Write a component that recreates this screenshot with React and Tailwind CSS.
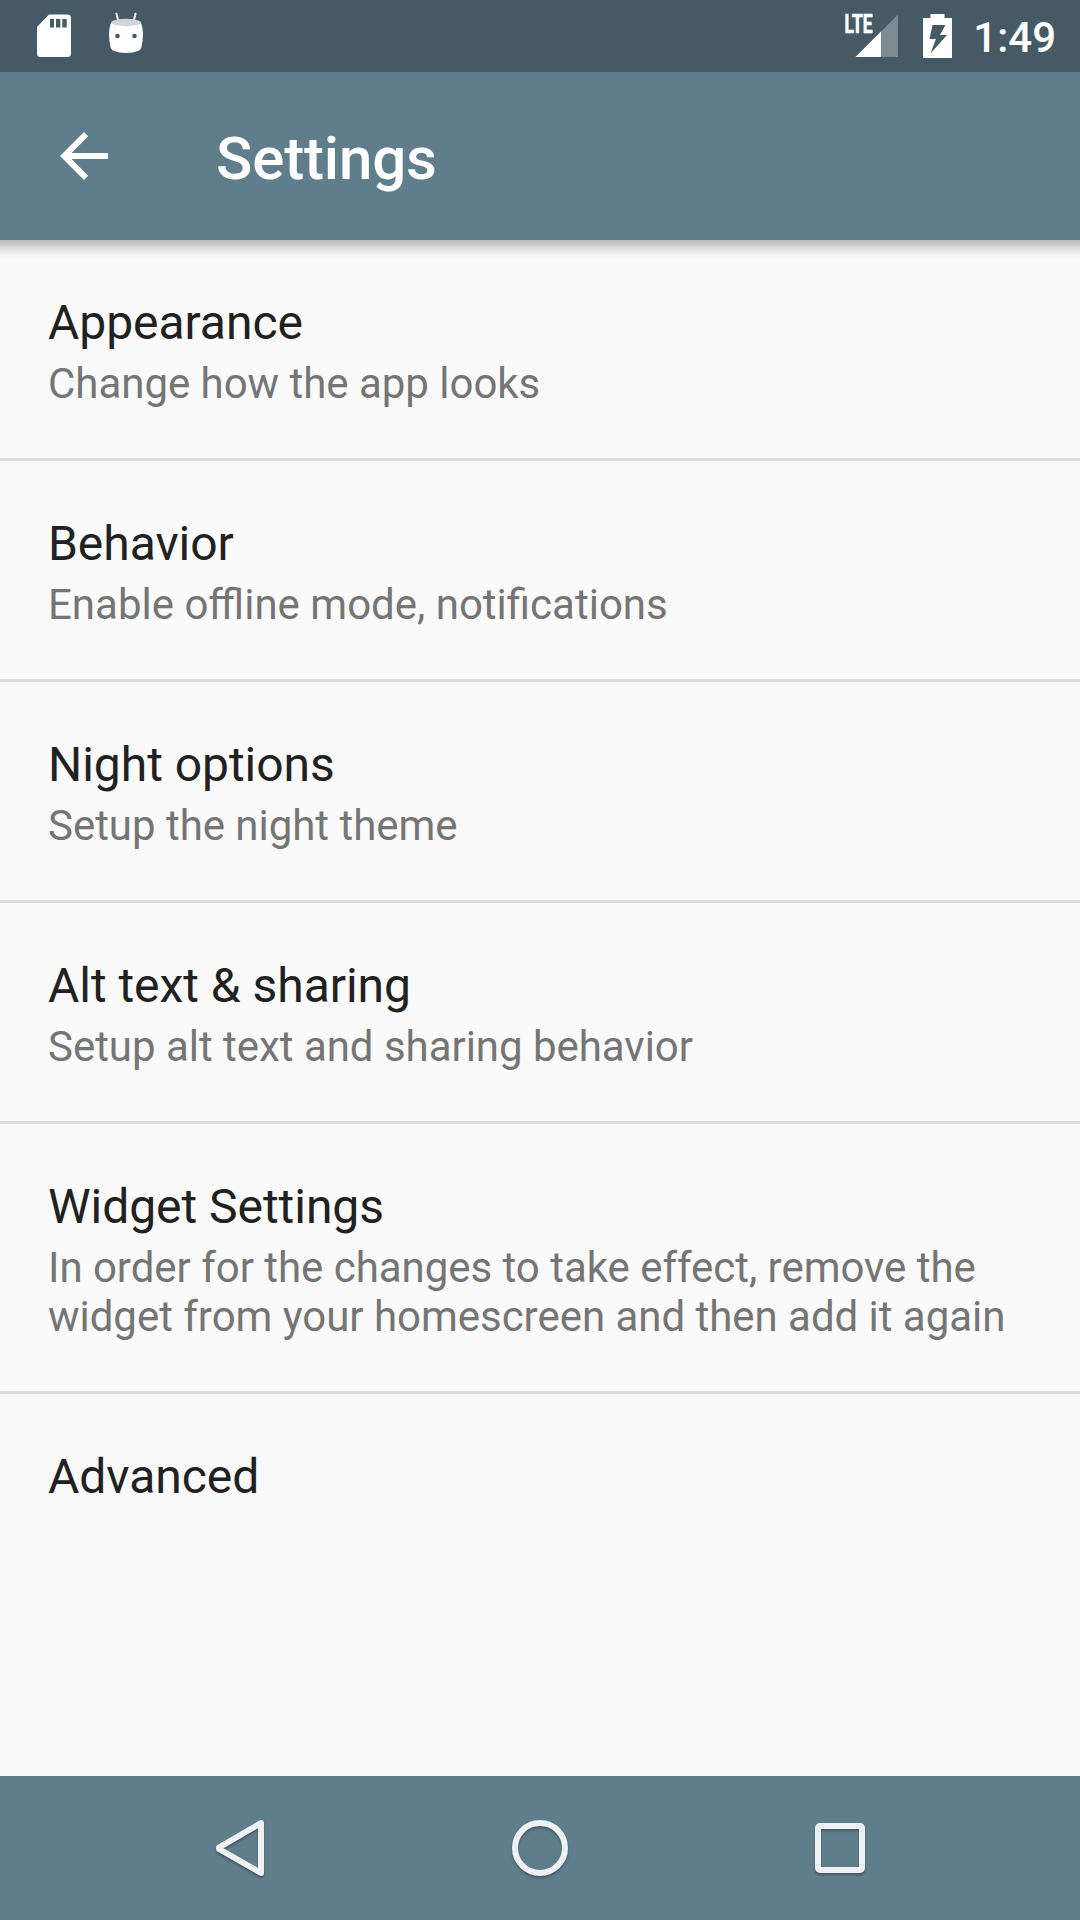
const ITEMS = [
  { title: "Appearance", summary: "Change how the app looks" },
  { title: "Behavior", summary: "Enable offline mode, notifications", ligatures: true },
  { title: "Night options", summary: "Setup the night theme" },
  { title: "Alt text & sharing", summary: "Setup alt text and sharing behavior" },
  {
    title: "Widget Settings",
    summary: "In order for the changes to take effect, remove the widget from your homescreen and then add it again",
  },
  { title: "Advanced" },
];

function SdCardIcon() {
  return (
    <svg className="ml-9 h-[72px] w-9 shrink-0" viewBox="36 0 36 72">
      <path fill="#fff" d="M49 14.5H67.5a3.5 3.5 0 0 1 3.5 3.5V53.500a3.500 3.500 0 0 1-3.500 3.500H40.500a3.500 3.500 0 0 1-3.500-3.500V27Z" />
      <path fill="#455a64" d="M50 19h4v8.500h-4zM56 19h4.300v8.500H56zM62.300 19h4.400v8.500h-4.400z" />
    </svg>
  );
}

function DroidIcon() {
  return (
    <svg className="ml-9 h-[72px] w-9 shrink-0" viewBox="108 0 36 72">
      <path d="M116.500 13.700l2 8M135.500 13.700l-2 8" stroke="#fff" strokeWidth="2" strokeLinecap="round" />
      <path fill="#fff" d="M111 22.500Q109 28 109 34q0 8 1.700 13.500Q111.500 50 114 51q5 2 12 2t12-2q2.500-1 3.300-3.500Q143 42 143 34q0-6-2-11.500Z" />
      <ellipse cx="126" cy="22.500" rx="15" ry="3.700" fill="#cfd4d8" />
      <circle cx="117.500" cy="36" r="2.300" fill="#455a64" />
      <circle cx="134.500" cy="36" r="2.300" fill="#455a64" />
    </svg>
  );
}

function SignalIcon() {
  return (
    <svg className="h-[72px] w-[60px] shrink-0" viewBox="842 0 60 72">
      <path fill="#fff" fillOpacity=".3" d="M898 14.500V57H855.500Z" />
      <path fill="#fff" d="M881 31.500V57H855.500Z" />
      <text x="844.500" y="33.300" fill="#fff" stroke="#fff" strokeWidth=".7" fontSize="25" fontWeight="700" fontFamily="Roboto, sans-serif" textLength="28" lengthAdjust="spacingAndGlyphs">LTE</text>
    </svg>
  );
}

function BatteryIcon() {
  return (
    <svg className="ml-[18px] h-[72px] w-9 shrink-0" viewBox="920 0 36 72">
      <path fill="#fff" fillRule="evenodd" d="M930.500 14h14v4H952v40H923V18h7.500ZM932.500 25L929.500 39H936L930.500 53.500L947 35H940L945.500 25Z" />
    </svg>
  );
}

function StatusBar() {
  return (
    <div className="z-20 flex h-[72px] shrink-0 items-center bg-[#455a64] text-white">
      <SdCardIcon />
      <DroidIcon />
      <div className="flex-1" />
      <SignalIcon />
      <BatteryIcon />
      <span className="ml-[17px] mr-6 mt-[3px] text-[42px] leading-[49px] font-medium">1:49</span>
    </div>
  );
}

function AppBar() {
  return (
    <header className="z-10 flex h-[168px] shrink-0 items-center bg-[#607d8b] pl-12 text-white shadow-[0_-6px_12px_12px_rgba(0,0,0,0.3)]">
      <svg className="size-[72px]" viewBox="0 0 24 24" fill="currentColor">
        <path d="M20 11H7.830l5.590-5.590L12 4l-8 8 8 8 1.410-1.410L7.830 13H20v-2z" />
      </svg>
      <h1 className="ml-24 mt-1.5 text-[60px] leading-[70px] font-medium tracking-[-0.15px]">Settings</h1>
    </header>
  );
}

function NavBar() {
  return (
    <nav className="flex h-36 shrink-0 items-center justify-center gap-[228px] bg-[#607d8b]">
      {[
        <path key="back" d="M15 35.500L57 11V61L15 37Z" />,
        <circle key="home" cx="36" cy="36" r="25" />,
        <rect key="recent" x="14" y="14" width="44" height="44" rx="2" />,
      ].map((shape) => (
        <svg
          key={shape.key}
          className="size-[72px] drop-shadow-[0_2px_1px_rgba(0,0,0,0.3)]"
          viewBox="0 0 72 72"
          fill="none"
          stroke="#eef1f3"
          strokeWidth="6"
          strokeLinejoin="round"
        >
          {shape}
        </svg>
      ))}
    </nav>
  );
}

export default function App() {
  return (
    <div className="flex h-[1920px] w-[1080px] flex-col overflow-hidden bg-[#fafafa] font-['Roboto',sans-serif]">
      <StatusBar />
      <AppBar />
      <main className="flex-1">
        {ITEMS.map(({ title, summary, ligatures }) => (
          <section key={title} className="border-b-3 border-[#dcdcdc] px-12 pt-[51px] pb-[50px] last:border-b-0">
            <h2 className="text-[48px] leading-[64px] tracking-[-0.04px] text-[#212121]">{title}</h2>
            {summary && (
              <p className={`mt-1 text-[42px] leading-[49px] text-[#757575] ${ligatures ? "tracking-normal" : "tracking-[-0.03px]"}`}>
                {summary}
              </p>
            )}
          </section>
        ))}
      </main>
      <NavBar />
    </div>
  );
}
